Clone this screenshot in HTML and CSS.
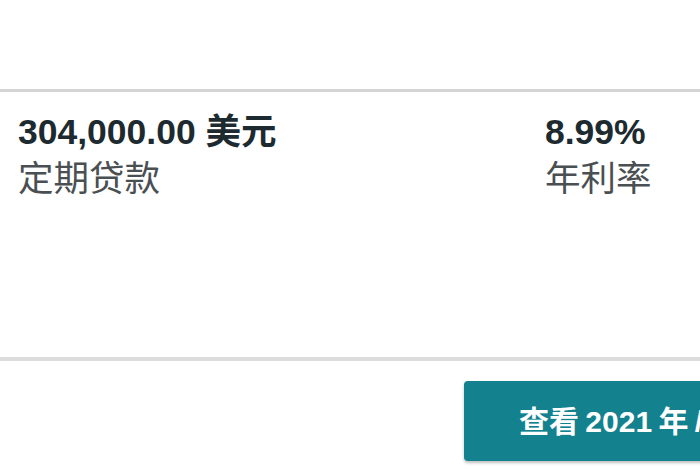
FILE: index.html
```html
<!DOCTYPE html>
<html lang="zh">
<head>
<meta charset="utf-8">
<link rel="stylesheet" href="styles.css">
</head>
<body>
<div class="page">
  <div class="top-space"></div>
  <section class="loan">
    <div class="col col-amount">
      <div class="value">304,000.00 美元</div>
      <div class="label">定期贷款</div>
    </div>
    <div class="col col-rate">
      <div class="value">8.99%</div>
      <div class="label">年利率</div>
    </div>
  </section>
  <div class="actions">
    <button class="btn">查看 2021 年 /</button>
  </div>
</div>
</body>
</html>
```

FILE: styles.css
```css
html, body {
  margin: 0;
  padding: 0;
  background: #ffffff;
  overflow: hidden;
}
body {
  width: 700px;
  height: 470px;
  font-family: "Liberation Sans", Arial, "Noto Sans CJK SC", sans-serif;
}
.page {
  display: flex;
  flex-direction: column;
}
.top-space {
  height: 89px;
}
.loan {
  border-top: 3px solid #d4d4d4;
  border-bottom: 4px solid #dcdcdc;
  height: 272px;
  display: flex;
  padding: 20px 0 0 18px;
  box-sizing: border-box;
}
.col-amount {
  width: 527px;
}
.value {
  font-size: 35.5px;
  font-weight: bold;
  color: #1d2a30;
  line-height: 40px;
}
.label {
  font-size: 35.5px;
  color: #4a4f52;
  line-height: 40px;
  margin-top: 7px;
  font-family: "Liberation Sans", "Noto Sans CJK SC", sans-serif;
}
.actions {
  display: flex;
  justify-content: flex-start;
  padding-top: 20px;
}
.btn {
  margin-left: 464px;
  width: 260px;
  flex-shrink: 0;
  height: 80px;
  background: #13818e;
  border: none;
  border-radius: 4px;
  box-shadow: 0 2px 3px rgba(0,0,0,0.25);
  color: #ffffff;
  font-family: "Liberation Sans", "Noto Sans CJK SC", sans-serif;
  font-size: 30px;
  font-weight: bold;
  text-align: left;
  word-spacing: -2px;
  padding: 0 0 4px 55px;
  white-space: nowrap;
}
```
